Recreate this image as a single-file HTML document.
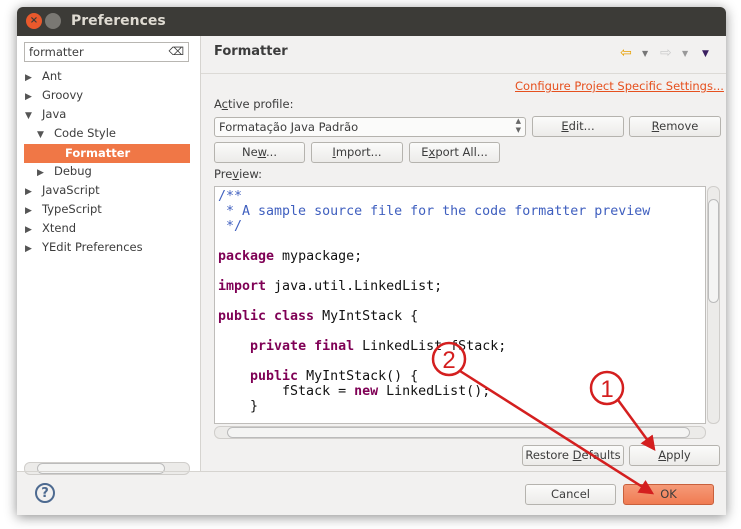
<!DOCTYPE html>
<html><head><style>
*{box-sizing:border-box;margin:0;padding:0}
body{width:741px;height:529px;background:#fff;font-family:"DejaVu Sans","Liberation Sans",sans-serif;font-size:11.5px;color:#3c3c3c;position:relative;overflow:hidden}
.win{position:absolute;left:17px;top:7px;width:709px;height:508px;background:#f2f1f0;box-shadow:0 2px 12px rgba(0,0,0,.45);border-radius:6px 6px 0 0;overflow:hidden}
.title{position:absolute;left:0;top:0;width:709px;height:29px;background:#3c3b37;color:#dfdbd2;font-weight:bold;font-size:14px;}
.abs{position:absolute}
.btn{position:absolute;height:21px;border:1px solid #b5b3ae;border-radius:3px;background:linear-gradient(#fbfbfa,#ecebe9);text-align:center;line-height:19px;font-size:11.5px;color:#3c3c3c}
.code{position:absolute;left:197px;top:179px;width:492px;height:238px;background:#fff;border:1px solid #bfbdba;font-family:"DejaVu Sans Mono","Liberation Mono",monospace;font-size:13.3px;line-height:15px;padding:2px 0 0 3px;white-space:pre;color:#111;overflow:hidden}
.k{color:#7f0055;font-weight:bold}.c{color:#3f5fbf}
.tree div{position:absolute;font-size:11.5px;color:#3c3c3c}
.tree i{font-style:normal;font-size:9px;color:#555;display:inline-block;width:17px}
</style></head><body>
<div class="win">
 <div class="title">
  <div class="abs" style="left:9px;top:6px;width:16px;height:16px;border-radius:50%;background:#e9592c;color:#3c3b37;font-size:10px;line-height:16px;text-align:center">×</div>
  <div class="abs" style="left:28px;top:6px;width:16px;height:16px;border-radius:50%;background:#7a7873"></div>
  <div class="abs" style="left:54px;top:6px">Preferences</div>
 </div>
 <div class="abs" style="left:0;top:29px;width:184px;height:435px;background:#fff;border-right:1px solid #d6d4d0"></div>
 <div class="abs" style="left:7px;top:35px;width:165px;height:20px;border:1px solid #b8b6b2;background:#fff;padding-left:4px;line-height:18px;font-size:11.5px">formatter<span style="position:absolute;right:4px;top:0;font-size:11px">⌫</span></div>
 <div class="tree">
  <div style="left:8px;top:62px"><i>▶</i>Ant</div>
  <div style="left:8px;top:81px"><i>▶</i>Groovy</div>
  <div style="left:8px;top:100px"><i>▼</i>Java</div>
  <div style="left:20px;top:119px"><i>▼</i>Code Style</div>
  <div style="left:7px;top:137px;width:166px;height:19px;background:#f07746"></div>
  <div style="left:48px;top:139px;color:#fff;font-weight:bold">Formatter</div>
  <div style="left:20px;top:157px"><i>▶</i>Debug</div>
  <div style="left:8px;top:176px"><i>▶</i>JavaScript</div>
  <div style="left:8px;top:195px"><i>▶</i>TypeScript</div>
  <div style="left:8px;top:214px"><i>▶</i>Xtend</div>
  <div style="left:8px;top:233px"><i>▶</i>YEdit Preferences</div>
 </div>
 <div class="abs" style="left:7px;top:455px;width:166px;height:13px;border:1px solid #d0cecb;border-radius:6px;background:#ecebe9"><div class="abs" style="left:12px;top:0;width:128px;height:11px;border:1px solid #bbb;border-radius:6px;background:#f4f4f3"></div></div>
 <div class="abs" style="left:184px;top:66px;width:525px;height:1px;background:#dcdad6"></div>
 <div class="abs" style="left:197px;top:37px;font-weight:bold;font-size:13px;color:#3c3c3c">Formatter</div>
 <div class="abs" style="left:603px;top:38px;color:#e8a000;font-size:14px">⇦</div>
 <div class="abs" style="left:625px;top:42px;color:#777;font-size:8px">▼</div>
 <div class="abs" style="left:643px;top:38px;color:#ccc;font-size:14px">⇨</div>
 <div class="abs" style="left:665px;top:42px;color:#999;font-size:8px">▼</div>
 <div class="abs" style="left:685px;top:42px;color:#3b2060;font-size:9px">▼</div>
 <div class="abs" style="left:498px;top:72px;color:#e6501e;text-decoration:underline;font-size:11.5px">Configure Project Specific Settings...</div>
 <div class="abs" style="left:197px;top:90px">A<u>c</u>tive profile:</div>
 <div class="abs" style="left:197px;top:110px;width:312px;height:20px;border:1px solid #b5b3ae;border-radius:3px;background:#fbfbfa;padding-left:4px;line-height:18px">Formatação Java Padrão<span style="position:absolute;right:4px;top:-1px;font-size:7px;line-height:9px;color:#666">▲<br>▼</span></div>
 <div class="btn" style="left:515px;top:109px;width:92px"><u>E</u>dit...</div>
 <div class="btn" style="left:612px;top:109px;width:92px"><u>R</u>emove</div>
 <div class="btn" style="left:197px;top:135px;width:91px">Ne<u>w</u>...</div>
 <div class="btn" style="left:294px;top:135px;width:92px"><u>I</u>mport...</div>
 <div class="btn" style="left:392px;top:135px;width:91px">E<u>x</u>port All...</div>
 <div class="abs" style="left:197px;top:160px">Pre<u>v</u>iew:</div>
 <div class="code"><span class="c">/**
 * A sample source file for the code formatter preview
 */</span>

<span class="k">package</span> mypackage;

<span class="k">import</span> java.util.LinkedList;

<span class="k">public class</span> MyIntStack {

    <span class="k">private final</span> LinkedList fStack;

    <span class="k">public</span> MyIntStack() {
        fStack = <span class="k">new</span> LinkedList();
    }</div>
 <div class="abs" style="left:690px;top:179px;width:13px;height:238px;border:1px solid #d0cecb;border-radius:6px;background:#ecebe9"><div class="abs" style="left:0;top:12px;width:11px;height:104px;border:1px solid #bbb;border-radius:6px;background:#f4f4f3"></div></div>
 <div class="abs" style="left:197px;top:419px;width:492px;height:13px;border:1px solid #d0cecb;border-radius:6px;background:#ecebe9"><div class="abs" style="left:12px;top:0;width:463px;height:11px;border:1px solid #bbb;border-radius:6px;background:#f4f4f3"></div></div>
 <div class="btn" style="left:505px;top:438px;width:102px">Restore <u>D</u>efaults</div>
 <div class="btn" style="left:612px;top:438px;width:91px"><u>A</u>pply</div>
 <div class="abs" style="left:0;top:464px;width:709px;height:1px;background:#d6d4d0"></div>
 <div class="abs" style="left:18px;top:476px;width:20px;height:20px;border:2px solid #4d6a90;border-radius:50%;color:#4d6a90;font-weight:bold;font-size:13px;text-align:center;line-height:17px">?</div>
 <div class="btn" style="left:508px;top:477px;width:91px">Cancel</div>
 <div class="btn" style="left:606px;top:477px;width:91px;background:linear-gradient(#f59a78,#f07b52);border-color:#c8603c;color:#3c3c3c">OK</div>
</div>
<svg class="abs" style="left:0;top:0" width="741" height="529">
 <defs><marker id="a" markerWidth="6" markerHeight="6" refX="5" refY="3" orient="auto"><path d="M0,0 L6,3 L0,6 z" fill="#d41f1f"/></marker></defs>
 <g stroke="#d41f1f" stroke-width="2.5" fill="none">
  <circle cx="607" cy="388" r="16"/>
  <circle cx="449" cy="359" r="16"/>
  <line x1="618" y1="400" x2="654" y2="449" marker-end="url(#a)"/>
  <line x1="460" y1="371" x2="652" y2="493" marker-end="url(#a)"/>
 </g>
 <text x="607" y="397" font-family="Liberation Sans" font-size="24" fill="#d41f1f" text-anchor="middle">1</text>
 <text x="449" y="368" font-family="Liberation Sans" font-size="24" fill="#d41f1f" text-anchor="middle">2</text>
</svg>
</body></html>
